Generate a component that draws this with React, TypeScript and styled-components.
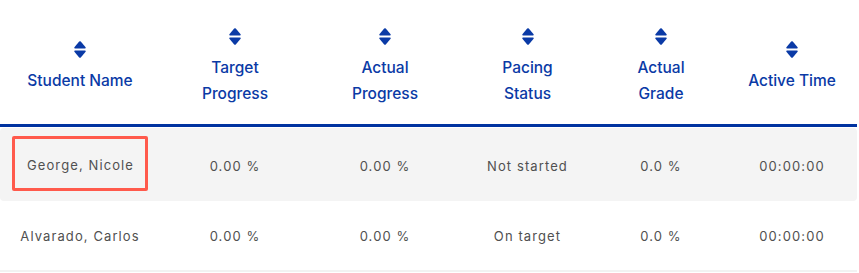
import React from 'react';
import styled, { createGlobalStyle } from 'styled-components';

const GlobalStyle = createGlobalStyle`
  html, body {
    margin: 0;
    padding: 0;
    background: #ffffff;
  }
  body {
    font-family: Inter, "Noto Sans", sans-serif;
  }
`;

const COLUMNS = '160px 150px 150px 135px 132px 130px';

const Table = styled.div`
  width: 857px;
`;

const HeaderRow = styled.div`
  display: grid;
  grid-template-columns: ${COLUMNS};
  height: 127px;
  box-sizing: border-box;
  padding-top: 10px;
  border-bottom: 3px solid #0033a0;
`;

const HeaderCell = styled.div`
  display: flex;
  flex-direction: column;
  align-items: center;
  justify-content: center;
  color: #0a3aa6;
  font-size: 15.5px;
  font-weight: 450;
  line-height: 26px;
  text-align: center;
`;

const SortIcon = styled.svg`
  display: block;
  width: 12px;
  height: 17px;
  margin-bottom: 10px;
  color: #0a3aa6;
`;

const Body = styled.div`
  padding-top: 1px;
  border-bottom: 2px solid #f2f2f2;
`;

const Row = styled.div<{ $shaded?: boolean }>`
  display: grid;
  grid-template-columns: ${COLUMNS};
  height: ${(p) => (p.$shaded ? '73px' : '68px')};
  margin-bottom: ${(p) => (p.$shaded ? '1px' : '0')};
  padding-top: ${(p) => (p.$shaded ? '2px' : '0')};
  box-sizing: border-box;
  background: ${(p) => (p.$shaded ? '#f4f4f4' : '#ffffff')};
  border-radius: 4px;
`;

const Cell = styled.div`
  display: flex;
  align-items: center;
  justify-content: center;
  color: #505050;
  font-size: 13px;
  letter-spacing: 1.1px;
`;

const Highlight = styled.span`
  display: inline-block;
  margin-bottom: 4px;
  padding: 18px 11px 15px 12px;
  border: 3px solid #ff5a4c;
  border-radius: 2px;
`;

const headers = [
  ['Student Name'],
  ['Target', 'Progress'],
  ['Actual', 'Progress'],
  ['Pacing', 'Status'],
  ['Actual', 'Grade'],
  ['Active Time']
];

const rows = [
  { name: 'George, Nicole', target: '0.00 %', actual: '0.00 %', pacing: 'Not started', grade: '0.0 %', time: '00:00:00', selected: true },
  { name: 'Alvarado, Carlos', target: '0.00 %', actual: '0.00 %', pacing: 'On target', grade: '0.0 %', time: '00:00:00', selected: false }
];

function Sort() {
  return (
    <SortIcon viewBox="0 0 12 17">
      <path d="M5.2 0.6 Q6 -0.2 6.8 0.6 L11.6 6.2 Q12 7.4 11 7.4 L1 7.4 Q0 7.4 0.4 6.2 Z" fill="currentColor" />
      <path d="M1 9.6 L11 9.6 Q12 9.6 11.6 10.8 L6.8 16.4 Q6 17.2 5.2 16.4 L0.4 10.8 Q0 9.6 1 9.6 Z" fill="currentColor" />
    </SortIcon>
  );
}

export default function App() {
  return (
    <>
      <GlobalStyle />
      <Table>
        <HeaderRow>
          {headers.map((lines) => (
            <HeaderCell key={lines.join(' ')}>
              <Sort />
              {lines.map((l) => (
                <div key={l}>{l}</div>
              ))}
            </HeaderCell>
          ))}
        </HeaderRow>
        <Body>
          {rows.map((r) => (
            <Row key={r.name} $shaded={r.selected}>
              <Cell>{r.selected ? <Highlight>{r.name}</Highlight> : r.name}</Cell>
              <Cell>{r.target}</Cell>
              <Cell>{r.actual}</Cell>
              <Cell>{r.pacing}</Cell>
              <Cell>{r.grade}</Cell>
              <Cell>{r.time}</Cell>
            </Row>
          ))}
        </Body>
      </Table>
    </>
  );
}
